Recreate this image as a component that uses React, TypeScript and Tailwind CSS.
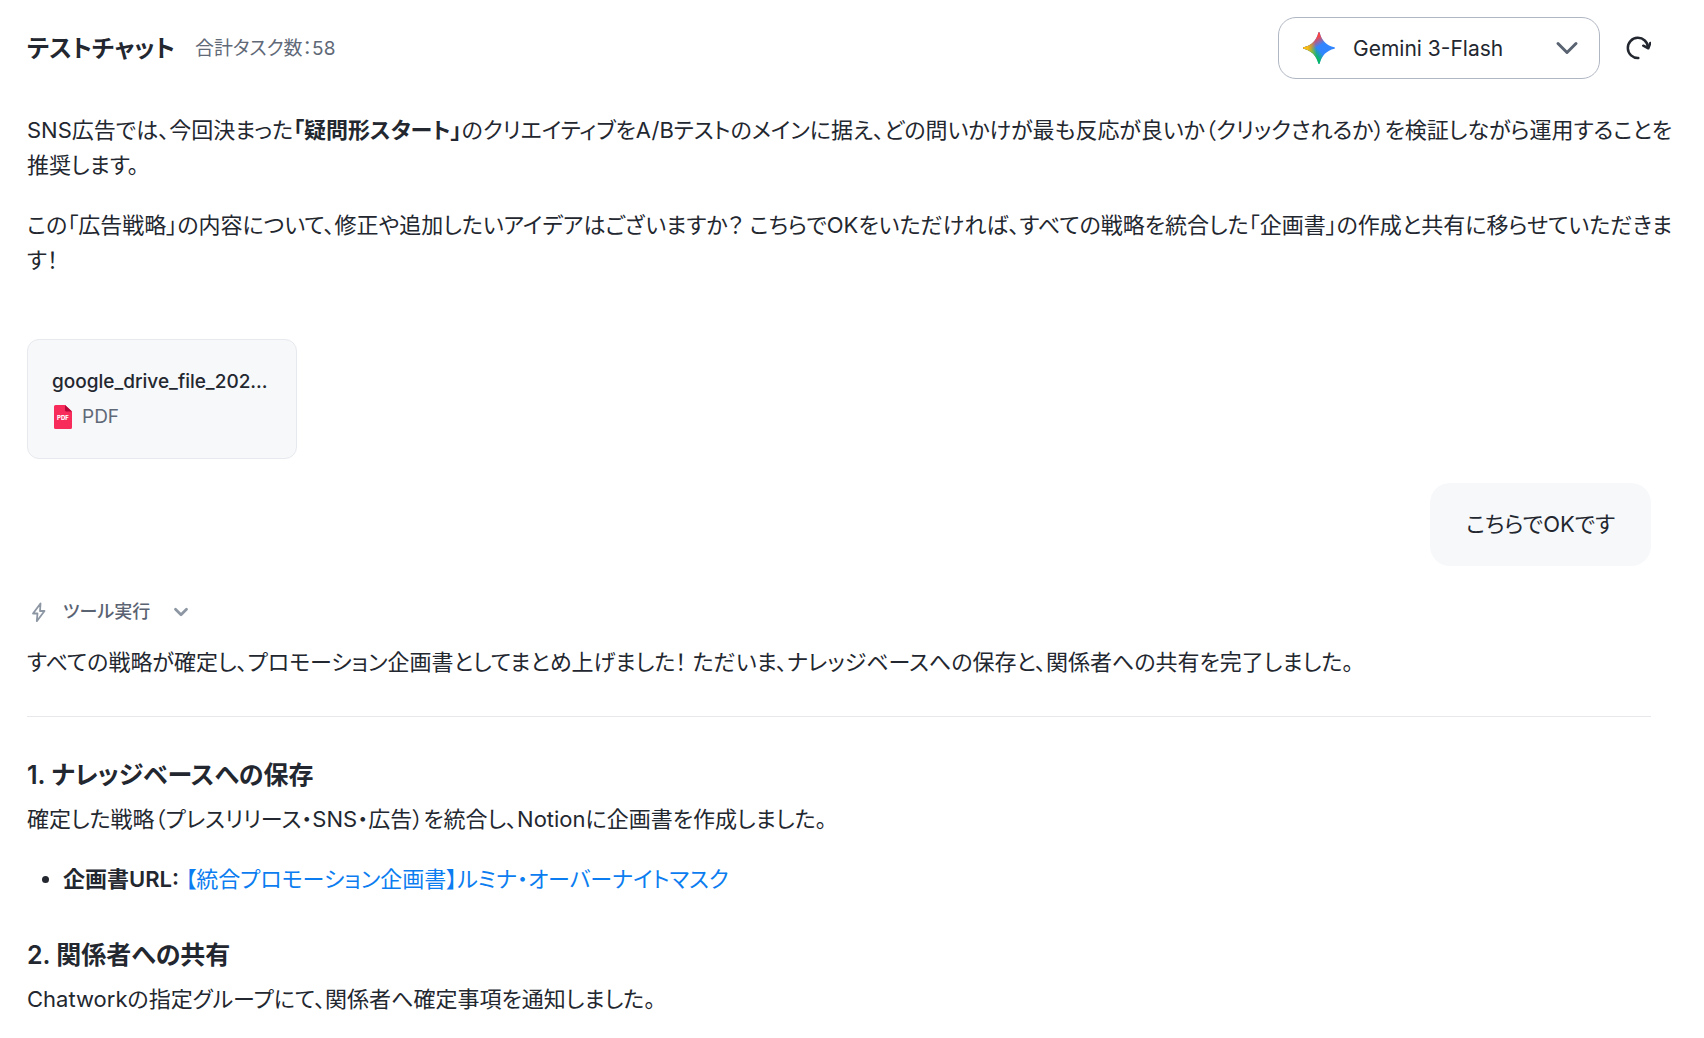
import { ChevronDown } from "lucide-react";
import type { ReactNode } from "react";

function GeminiIcon() {
  return (
    <svg viewBox="0 0 32 32" className="pointer-events-none absolute left-[25px] size-8" aria-hidden="true">
      <defs>
        <linearGradient id="g-green" x1="9.300" y1="20.700" x2="14.700" y2="16" gradientUnits="userSpaceOnUse">
          <stop stopColor="#08b962" />
          <stop offset="1" stopColor="#08b962" stopOpacity="0" />
        </linearGradient>
        <linearGradient id="g-red" x1="10.700" y1="7.300" x2="15.300" y2="14.700" gradientUnits="userSpaceOnUse">
          <stop stopColor="#f94543" />
          <stop offset="1" stopColor="#f94543" stopOpacity="0" />
        </linearGradient>
        <linearGradient id="g-yellow" x1="4.700" y1="18" x2="23.300" y2="16" gradientUnits="userSpaceOnUse">
          <stop stopColor="#fabc12" />
          <stop offset="0.46" stopColor="#fabc12" stopOpacity="0" />
        </linearGradient>
      </defs>
      {["#3186ff", "url(#g-green)", "url(#g-red)", "url(#g-yellow)"].map((fill) => (
        <path
          key={fill}
          fill={fill}
          d="M16 0c.4 0 .6.3.7.7 1.700 7.500 7.100 12.900 14.600 14.600.4.1.7.3.7.7s-.3.600-.7.700c-7.500 1.700-12.900 7.100-14.600 14.600-.1.400-.3.700-.7.700s-.6-.3-.7-.7C13.600 23.800 8.200 18.400.7 16.700.3 16.600 0 16.400 0 16s.3-.6.7-.7C8.200 13.600 13.600 8.200 15.300.7c.1-.4.3-.7.7-.7z"
        />
      ))}
    </svg>
  );
}

function PdfIcon() {
  return (
    <svg viewBox="0 0 18 24" className="h-6 w-[18px]" aria-hidden="true">
      <path fill="#f72c5b" d="M1.500 0H11l7 6.500v16a1.500 1.500 0 0 1-1.500 1.500h-15A1.500 1.500 0 0 1 0 22.500v-21A1.500 1.500 0 0 1 1.500 0z" />
      <path fill="#b4083a" d="M11 0l7 6.500h-5.500A1.500 1.500 0 0 1 11 5z" />
      <text x="9" y="14.500" textAnchor="middle" fill="#fff" fontFamily="Inter, sans-serif" fontWeight="800" fontSize="6">
        PDF
      </text>
    </svg>
  );
}

function Section({ title, children }: { title: string; children: ReactNode }) {
  return (
    <section className="mt-10">
      <h2 className="text-[25px] leading-9 font-semibold">{title}</h2>
      <div className="mt-[9px]">{children}</div>
    </section>
  );
}

export default function App() {
  return (
    <main className="min-h-screen bg-white pt-[17px] pr-[53px] pb-4 pl-[27px] font-[Inter,'Noto_Sans_CJK_JP',sans-serif] text-[22px] leading-[35px] text-[#23272f] [font-feature-settings:'palt']">
      <header className="flex items-center">
        <h1 className="text-[24px] font-semibold">テストチャット</h1>
        <p className="ml-5 text-[19px] text-[#5f6977]">合計タスク数：58</p>
        <div className="relative ml-auto flex w-[322px] items-center">
          <GeminiIcon />
          <select
            aria-label="モデル"
            className="h-[62px] w-full appearance-none rounded-[18px] border border-[#b0b7c3] bg-transparent pr-16 pl-[74px] text-[21px]"
          >
            <option>Gemini 3-Flash</option>
          </select>
          <ChevronDown className="pointer-events-none absolute right-[15px] size-9 text-[#5a6372]" strokeWidth={2} />
        </div>
        <button type="button" aria-label="更新" className="ml-[25px]">
          <svg viewBox="0 0 26 26" className="size-[26px]" fill="none" stroke="currentColor" strokeWidth="2.500" strokeLinecap="round" strokeLinejoin="round">
            <path d="M13.300 23A10.100 10.100 0 1 1 23 12.500" />
            <path d="M18.300 10.700l5 2.600 2-5.300" />
          </svg>
        </button>
      </header>

      <div className="mt-[34px] -mr-8 space-y-[25px]">
        <p>
          SNS広告では、今回決まった<strong>「疑問形スタート」</strong>
          のクリエイティブをA/Bテストのメインに据え、どの問いかけが最も反応が良いか（クリックされるか）を検証しながら運用することを推奨します。
        </p>
        <p>
          この「広告戦略」の内容について、修正や追加したいアイデアはございますか？ こちらでOKをいただければ、すべての戦略を統合した「企画書」の作成と共有に移らせていただきます！
        </p>
      </div>

      <button
        type="button"
        className="mt-[61px] block h-[120px] w-[270px] rounded-xl border border-[#e6e9ee] bg-[#f7f8fa] px-6 text-left text-[19px]"
      >
        <span className="block font-medium whitespace-nowrap">google_drive_file_202...</span>
        <span className="flex items-center gap-[10px] pl-[2px] text-[#5f6977]">
          <PdfIcon />
          PDF
        </span>
      </button>

      <p className="mt-6 ml-auto w-fit rounded-[20px] bg-[#f7f8fa] px-9 py-6">こちらでOKです</p>

      <button type="button" className="mt-7 flex items-center text-[18px] font-medium text-[#5a6372]">
        <svg viewBox="0 0 24 24" className="size-6 text-[#8d96a3]" fill="none" stroke="currentColor" strokeWidth="1.800" strokeLinejoin="round">
          <path d="M13.500 3.500L6 13.500h4.500L9.800 21.200 17.500 11H13z" />
        </svg>
        <span className="ml-3">ツール実行</span>
        <ChevronDown className="ml-5 size-[22px] text-[#8d96a3]" strokeWidth={3} />
      </button>
      <p className="mt-4">
        すべての戦略が確定し、プロモーション企画書としてまとめ上げました！ ただいま、ナレッジベースへの保存と、関係者への共有を完了しました。
      </p>

      <hr className="mt-9 border-[#e6e8eb]" />

      <Section title="1. ナレッジベースへの保存">
        <p>確定した戦略（プレスリリース・SNS・広告）を統合し、Notionに企画書を作成しました。</p>
        <ul className="mt-[25px] list-disc pl-9">
          <li>
            <strong className="font-semibold">企画書URL:</strong>{" "}
            <a href="#plan" className="text-[#0b7df0]">
              【統合プロモーション企画書】ルミナ・オーバーナイトマスク
            </a>
          </li>
        </ul>
      </Section>
      <Section title="2. 関係者への共有">
        <p>Chatworkの指定グループにて、関係者へ確定事項を通知しました。</p>
      </Section>
    </main>
  );
}
